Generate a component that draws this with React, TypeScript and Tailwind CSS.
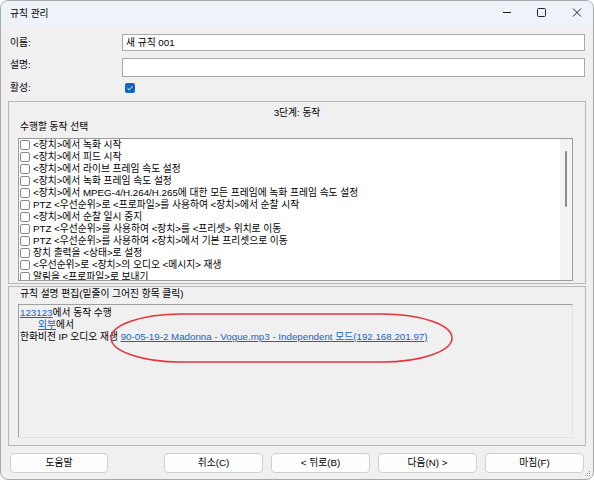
import React from "react";

const items = [
  "<장치>에서 녹화 시작",
  "<장치>에서 피드 시작",
  "<장치>에서 라이브 프레임 속도 설정",
  "<장치>에서 녹화 프레임 속도 설정",
  "<장치>에서 MPEG-4/H.264/H.265에 대한 모든 프레임에 녹화 프레임 속도 설정",
  "PTZ <우선순위>로 <프로파일>를 사용하여 <장치>에서 순찰 시작",
  "<장치>에서 순찰 일시 중지",
  "PTZ <우선순위>를 사용하여 <장치>를 <프리셋> 위치로 이동",
  "PTZ <우선순위>를 사용하여 <장치>에서 기본 프리셋으로 이동",
  "장치 출력을 <상태>로 설정",
  "<우선순위>로 <장치>의 오디오 <메시지> 재생",
  "알림을 <프로파일>로 보내기",
];

function Btn({ label, className = "" }: { label: string; className?: string }) {
  return (
    <div
      className={
        "h-[20px] flex items-center justify-center bg-[#fdfdfd] border border-[#d0d0d0] rounded-[4px] " +
        className
      }
    >
      {label}
    </div>
  );
}

export default function App() {
  return (
    <div className="w-[594px] h-[480px] bg-white">
      <div className="relative w-[594px] h-[480px] box-border border border-[#a8a8a8] rounded-[8px] overflow-hidden bg-[#f0f0f0] flex flex-col text-[9.75px] leading-[12px] text-black font-['Liberation_Sans','Noto_Sans_CJK_KR',sans-serif]">
        {/* Title bar */}
        <div className="h-[25px] shrink-0 bg-[#eef3f9] flex items-center pl-[9px]">
          <span className="flex-1">규칙 관리</span>
          <svg width="93" height="25" viewBox="0 0 93 25" className="block">
            <line x1="3" y1="11.5" x2="11" y2="11.5" stroke="#222" strokeWidth="1" />
            <rect x="37.5" y="7.5" width="8" height="8" rx="1" fill="none" stroke="#222" strokeWidth="1" />
            <path d="M73 7.5 L81 15.5 M81 7.5 L73 15.5" stroke="#222" strokeWidth="1" />
          </svg>
        </div>

        {/* Form */}
        <div className="flex items-center h-[17px] mt-[8px] pl-[9px] pr-[8px]">
          <span className="w-[112px]">이름:</span>
          <div className="flex-1 h-full bg-white border border-[#a9a9a9] flex items-center px-[3px]">새 규칙 001</div>
        </div>
        <div className="flex items-center h-[19px] mt-[7px] pl-[9px] pr-[8px]">
          <span className="w-[112px] self-start pt-[1px]">설명:</span>
          <div className="flex-1 h-full bg-white border border-[#a9a9a9]" />
        </div>
        <div className="flex items-center h-[12px] mt-[5px] pl-[9px]">
          <span className="w-[115px]">활성:</span>
          <div className="w-[10px] h-[10px] rounded-[2px] bg-[#0f65c4] flex items-center justify-center">
            <svg width="8" height="8" viewBox="0 0 8 8">
              <path d="M1.5 4.2 L3.2 5.8 L6.5 2.3" fill="none" stroke="white" strokeWidth="1" />
            </svg>
          </div>
        </div>

        {/* Group 1 */}
        <div className="mt-[7px] mx-[7px] h-[183px] border border-[#b8b8b8] flex flex-col">
          <div className="text-center mt-[5px] h-[12px]">3단계: 동작</div>
          <div className="ml-[11px] mt-[2px] h-[12px]">수행할 동작 선택</div>
          <div className="ml-[9px] mr-[12px] mt-[5px] h-[143px] bg-white border border-[#9a9a9a] flex overflow-hidden">
            <div className="flex-1 overflow-hidden">
              {items.map((t, i) => (
                <div key={i} className="h-[12px] flex items-center whitespace-nowrap pl-[1px]">
                  <div className="w-[10px] h-[10px] rounded-[2px] border border-[#8a8a8a] bg-white mr-[3px] shrink-0" />
                  <span>{t}</span>
                </div>
              ))}
            </div>
            <div className="w-[12px] h-full bg-[#f3f3f3] flex justify-center pt-[12px]">
              <div className="w-[2px] h-[56px] bg-[#8a8a8a] rounded-full" />
            </div>
          </div>
        </div>

        {/* Group 2 */}
        <div className="mt-[2px] mx-[7px] h-[160px] border border-[#b8b8b8] flex flex-col">
          <div className="ml-[11px] mt-[1px] h-[12px]">규칙 설명 편집(밑줄이 그어진 항목 클릭)</div>
          <div className="ml-[9px] mr-[12px] mt-[4px] h-[134px] border-t border-l border-[#a0a0a0] border-r-[#e2e2e2] border-b-[#e2e2e2] border-r border-b pt-[2px] pl-[1px]">
            <div className="h-[12px] whitespace-nowrap">
              <span className="text-[#1463c8] underline">123123</span>에서 동작 수행
            </div>
            <div className="h-[12px] whitespace-nowrap pl-[18px]">
              <span className="text-[#1463c8] underline">외부</span>에서
            </div>
            <div className="h-[12px] whitespace-nowrap">
              한화비전 IP 오디오 재생{" "}
              <span className="text-[#1463c8] underline">
                90-05-19-2 Madonna - Vogue.mp3 - Independent 모드(192.168.201.97)
              </span>
            </div>
          </div>
        </div>

        {/* Buttons */}
        <div className="mt-[7px] flex px-[9px]">
          <Btn label="도움말" className="w-[98px]" />
          <div className="flex-1" />
          <div className="flex gap-[8px]">
            <Btn label="취소(C)" className="w-[99px]" />
            <Btn label="< 뒤로(B)" className="w-[99px]" />
            <Btn label="다음(N) >" className="w-[99px]" />
            <Btn label="마침(F)" className="w-[99px]" />
          </div>
        </div>

        {/* Resize grip */}
        <svg width="6" height="6" viewBox="0 0 6 6" className="absolute right-[2px] bottom-[2px]">
          <rect x="4" y="0" width="1" height="1" fill="#9a9a9a" />
          <rect x="2" y="2" width="1" height="1" fill="#9a9a9a" />
          <rect x="4" y="2" width="1" height="1" fill="#9a9a9a" />
          <rect x="0" y="4" width="1" height="1" fill="#9a9a9a" />
          <rect x="2" y="4" width="1" height="1" fill="#9a9a9a" />
          <rect x="4" y="4" width="1" height="1" fill="#9a9a9a" />
        </svg>

        {/* Red annotation ellipse */}
        <svg
          width="346"
          height="54"
          viewBox="0 0 346 54"
          className="absolute left-[108px] top-[311px] pointer-events-none"
        >
          <rect x="2" y="2" width="341" height="48" rx="70" ry="24" fill="none" stroke="#e8323c" strokeWidth="1.5" />
        </svg>
      </div>
    </div>
  );
}
